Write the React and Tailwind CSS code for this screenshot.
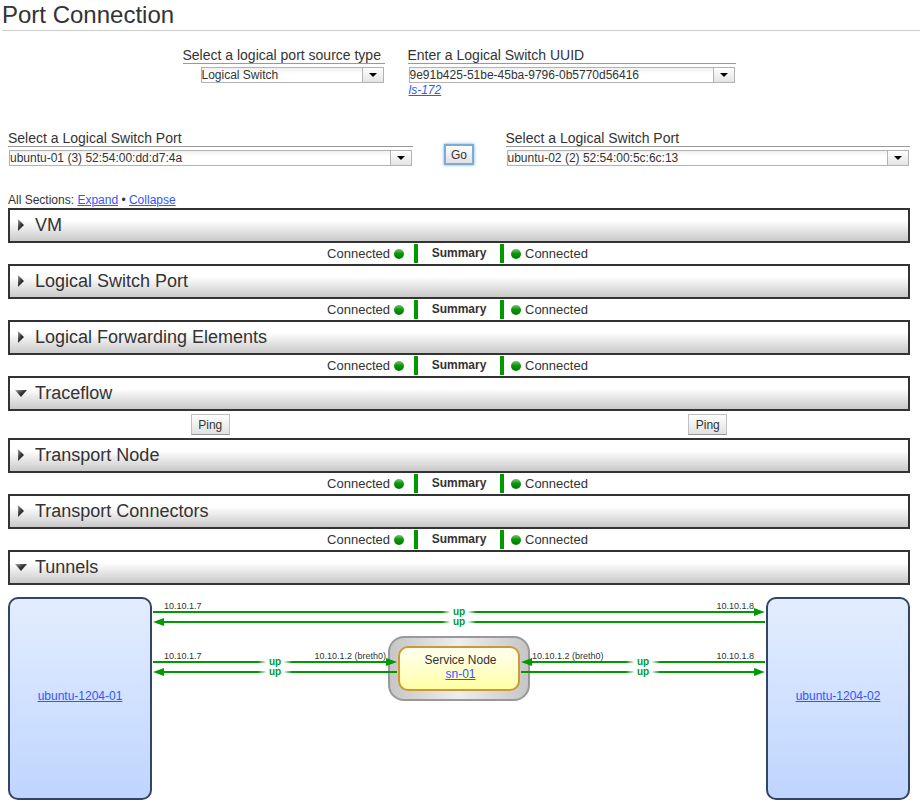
import React from "react";

const fieldBox =
  "block h-4 w-full appearance-none rounded-none border border-[#b3b3b3] bg-linear-to-b from-[#f0f0f0] via-white via-40% to-white pl-0 text-xs leading-[14px] text-[#333] outline-none";

const arrowBox =
  "flex h-4 w-[22px] items-center justify-center border border-[#b3b3b3] bg-linear-to-b from-white to-[#e4e4e4]";

function Caret() {
  return (
    <svg width="8" height="4" viewBox="0 0 8 4" aria-hidden="true">
      <path d="M0 0h8L4 4z" fill="#000" />
    </svg>
  );
}

function Label({ id, children }) {
  return (
    <label htmlFor={id} className="block border-b border-[#999] text-sm leading-4">
      {children}
    </label>
  );
}

function Select({ id, value }) {
  return (
    <div className="relative">
      <select id={id} defaultValue={value} className={fieldBox + " pr-6"}>
        <option>{value}</option>
      </select>
      <span className={arrowBox + " pointer-events-none absolute top-0 right-0"}>
        <Caret />
      </span>
    </div>
  );
}

function PushButton({ children }) {
  return (
    <button
      type="button"
      className="h-[21px] w-[39px] border border-[#c0c0c0] border-b-[#999] bg-linear-to-b from-white to-[#e1e1e1] text-xs leading-4"
    >
      {children}
    </button>
  );
}

function Link({ children, className = "" }) {
  return (
    <a href="#" className={"text-[#3355ff] underline " + className}>
      {children}
    </a>
  );
}

function Disclosure({ open }) {
  return (
    <svg width="14" height="14" viewBox="0 0 14 14" aria-hidden="true">
      <defs>
        <linearGradient id="disclosure" x1="0" y1="0" x2="1" y2="1">
          <stop offset="0" stopColor="#aaa" />
          <stop offset="0.5" stopColor="#333" />
          <stop offset="1" stopColor="#222" />
        </linearGradient>
      </defs>
      <path d={open ? "M1 4h12L7 11z" : "M4 1l6 6-6 6z"} fill="url(#disclosure)" />
    </svg>
  );
}

function Section({ title, open = false, children }) {
  return (
    <section>
      <h2>
        <button
          type="button"
          aria-expanded={open}
          className="flex h-[35px] w-full items-center gap-[7px] border-2 border-[#333] bg-linear-to-b from-white from-35% to-[#c9c9c9] pb-0.5 pl-1 text-left text-lg leading-6"
        >
          <Disclosure open={open} />
          {title}
        </button>
      </h2>
      {children}
    </section>
  );
}

function Dot() {
  return (
    <span className="size-2.5 rounded-full bg-linear-to-b from-[#6fc46f] via-[#0b9a0b] via-40% to-[#007a00]" />
  );
}

function Summary() {
  return (
    <div className="grid h-[21px] grid-cols-[1fr_90px_1fr] py-px text-[13px] leading-[19px]">
      <div className="flex items-center justify-end gap-1 pr-2.5">
        Connected
        <Dot />
      </div>
      <div className="border-x-4 border-[#009900] text-center text-xs leading-[19px] font-bold">
        Summary
      </div>
      <div className="flex items-center gap-1 pl-[7px]">
        <Dot />
        Connected
      </div>
    </div>
  );
}

function ArrowHead({ left }) {
  return (
    <svg width="11" height="8" viewBox="0 0 11 8" className="shrink-0" aria-hidden="true">
      <path d={left ? "M11 0v8L0 4z" : "M0 0v8l11-4z"} fill="#009900" />
    </svg>
  );
}

function Line({ to }) {
  return (
    <div className="relative flex h-2.5 items-center">
      {to === "left" && <ArrowHead left />}
      <div className="h-0.5 grow bg-[#009900]" />
      {to === "right" && <ArrowHead />}
      <div className="absolute inset-0 flex justify-center">
        <span className="w-[34px] bg-[linear-gradient(to_right,transparent,white_25%,white_75%,transparent)] text-center text-[10px] leading-[10px] font-bold text-[#009933]">
          up
        </span>
      </div>
    </div>
  );
}

function Tunnel({ from, to, directions }) {
  return (
    <div className="grow basis-0">
      <div className="-mb-1 flex h-2.5 justify-between px-3 text-[9px] leading-[10px]">
        <span>{from}</span>
        <span>{to}</span>
      </div>
      <div className="px-px">
        {directions.map((d) => (
          <Line key={d} to={d} />
        ))}
      </div>
    </div>
  );
}

function Host({ name }) {
  return (
    <div className="flex h-[203px] w-36 shrink-0 items-center justify-center rounded-[10px] border-2 border-[#334466] bg-linear-to-b from-[#e3edff] to-[#bfd5ff] pb-1.5 text-xs">
      <Link>{name}</Link>
    </div>
  );
}

function ServiceNode() {
  return (
    <div className="relative h-[45px] w-[122px] shrink-0">
      <div className="absolute -inset-2.5 -z-10 rounded-2xl border-2 border-[#999] bg-linear-to-r from-[#c6c6c6] via-[#eee] to-[#c6c6c6]" />
      <div className="flex h-full flex-col items-center rounded-[10px] border-2 border-[#cc9933] bg-linear-to-b from-[#fffff0] to-[#ffffa6] pt-[5px] pl-[3px] text-xs leading-[14px]">
        <span>Service Node</span>
        <Link>sn-01</Link>
      </div>
    </div>
  );
}

function TunnelDiagram() {
  return (
    <div className="flex pt-3">
      <Host name="ubuntu-1204-01" />
      <div className="isolate flex grow flex-col gap-[19px] pt-1">
        <div className="flex">
          <Tunnel from="10.10.1.7" to="10.10.1.8" directions={["right", "left"]} />
        </div>
        <div className="flex">
          <div className="flex grow basis-0 pt-[5px]">
            <Tunnel from="10.10.1.7" to="10.10.1.2 (breth0)" directions={["right", "left"]} />
          </div>
          <ServiceNode />
          <div className="flex grow basis-0 pt-[5px]">
            <Tunnel from="10.10.1.2 (breth0)" to="10.10.1.8" directions={["left", "right"]} />
          </div>
        </div>
      </div>
      <Host name="ubuntu-1204-02" />
    </div>
  );
}

export default function App() {
  return (
    <main className="min-h-screen bg-white pb-2 font-['Liberation_Sans',Arial,sans-serif] text-[#333]">
      <h1 className="ml-0.5 border-b border-[#ccc] text-2xl leading-[30px]">Port Connection</h1>

      <div className="pr-2.5 pl-2">
        <form>
          <div className="flex justify-center gap-[23px] pt-4">
            <div className="w-[202px]">
              <Label id="source-type">Select a logical port source type</Label>
              <div className="pt-[3px] pr-px pl-[18px]">
                <Select id="source-type" value="Logical Switch" />
              </div>
            </div>
            <div className="w-[328px]">
              <Label id="switch-uuid">Enter a Logical Switch UUID</Label>
              <div className="flex px-px pt-[3px]">
                <input
                  id="switch-uuid"
                  type="text"
                  defaultValue="9e91b425-51be-45ba-9796-0b5770d56416"
                  className={fieldBox + " border-r-0"}
                />
                <button type="button" aria-label="Show switches" className={arrowBox + " shrink-0"}>
                  <Caret />
                </button>
              </div>
              <p className="pl-px text-xs leading-[14px]">
                <Link className="italic">ls-172</Link>
              </p>
            </div>
          </div>

          <div className="grid grid-cols-[1fr_93px_1fr] pt-[33px]">
            <div>
              <Label id="port-a">Select a Logical Switch Port</Label>
              <div className="px-px pt-[3px]">
                <Select id="port-a" value="ubuntu-01 (3) 52:54:00:dd:d7:4a" />
              </div>
            </div>
            <div className="flex items-end justify-center pb-px">
              <button
                type="button"
                className="h-[21px] border-2 border-[#7fabd8] bg-linear-to-b from-white to-[#e1e1e1] px-[5px] text-xs leading-4 shadow-[0_0_3px_#6aa5dd]"
              >
                Go
              </button>
            </div>
            <div>
              <Label id="port-b">Select a Logical Switch Port</Label>
              <div className="px-px pt-[3px]">
                <Select id="port-b" value="ubuntu-02 (2) 52:54:00:5c:6c:13" />
              </div>
            </div>
          </div>
        </form>

        <p className="pt-[26px] text-xs leading-4">
          All Sections: <Link>Expand</Link> • <Link>Collapse</Link>
        </p>

        <Section title="VM">
          <Summary />
        </Section>
        <Section title="Logical Switch Port">
          <Summary />
        </Section>
        <Section title="Logical Forwarding Elements">
          <Summary />
        </Section>
        <Section title="Traceflow" open>
          <div className="grid h-[27px] grid-cols-[1fr_93px_1fr] pt-[3px]">
            <div className="text-center leading-none">
              <PushButton>Ping</PushButton>
            </div>
            <div className="col-start-3 text-center leading-none">
              <PushButton>Ping</PushButton>
            </div>
          </div>
        </Section>
        <Section title="Transport Node">
          <Summary />
        </Section>
        <Section title="Transport Connectors">
          <Summary />
        </Section>
        <Section title="Tunnels" open>
          <TunnelDiagram />
        </Section>
      </div>
    </main>
  );
}
